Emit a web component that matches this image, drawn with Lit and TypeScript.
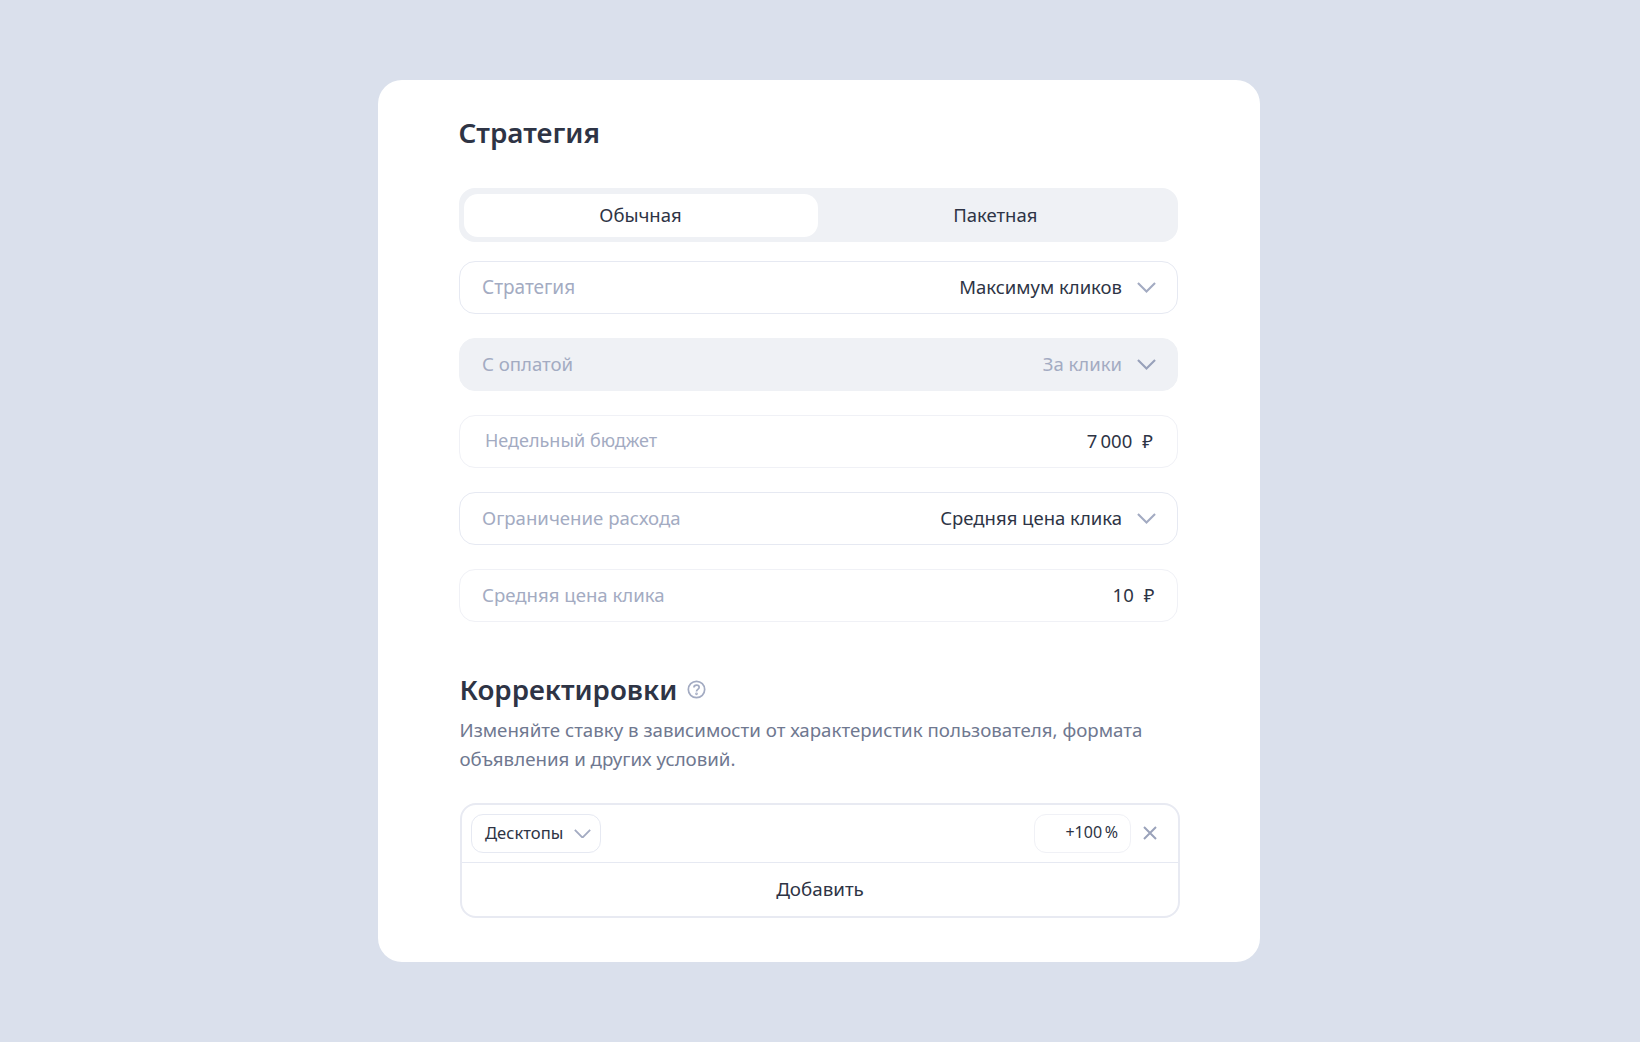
import { LitElement, html, css } from "lit";
import { customElement } from "lit/decorators.js";

const chevron = (cls: string) => html`<svg class=${cls} viewBox="0 0 20 11" fill="none" stroke="currentColor" stroke-width="2.2"><path d="M1 1 10 10 19 1"/></svg>`;

@customElement("app-root")
export class AppRoot extends LitElement {
  static styles = css`
    :host { display: block; font-family: "Noto Sans", sans-serif; color: #2e3445; }
    * { box-sizing: border-box; }
    .page { height: 1042px; overflow: hidden; background: #dae0ec; padding: 80px 2px 0 0; display: flex; justify-content: center; align-items: flex-start; }
    .card { width: 882px; height: 881.5px; background: #fff; border-radius: 24px; padding: 0 82px 0 80.5px; display: flex; flex-direction: column; }
    h1 { margin: 0; font-size: 27.8px; line-height: 36px; font-weight: 600; padding-top: 33.5px; height: 108px; }
    .tabs { height: 54px; background: #eff1f5; border-radius: 16px; display: flex; padding: 6px 5px 5px; margin-bottom: 19px; }
    .tab { flex: 1; display: flex; align-items: center; justify-content: center; font-size: 18.5px; border-radius: 14px; padding-bottom: 2px; }
    .tab.on { background: #fff; flex: 0 0 354px; }
    .field { height: 53px; border: 1.5px solid #e6e9f2; border-radius: 16px; display: flex; align-items: center; justify-content: space-between; padding: 0 21px 2px 22.5px; font-size: 18.5px; margin-bottom: 24px; }
    .field.input { border-color: #f0f1f6; height: 52.5px; margin-bottom: 24.5px; }
    .field.dis { background: #eff1f5; border-color: #eff1f5; }
    .field.w { padding-left: 25.5px; }
    .field.w .label { font-size: 18px; }
    .label { color: #a3abc2; font-size: 18.6px; }
    .label.big { font-size: 19px; }
    .val { display: flex; align-items: center; gap: 15px; }
    .dis .val span { color: #a3abc2; }
    .chev { width: 19px; height: 10.5px; color: #a3abc2; flex: none; margin-top: 2px; }
    .dis .chev { color: #98a1ba; }
    .cur { display: flex; gap: 10px; padding-right: 3px; }
    .cur.n { padding-right: 1.5px; }
    h2 { margin: 25px 0 0 1px; font-size: 27.7px; line-height: 36px; font-weight: 600; display: flex; align-items: center; gap: 10px; }
    h2 svg { width: 19px; height: 19px; }
    p { margin: 9px 0 0 1px; font-size: 18.7px; line-height: 28.7px; color: #6f7890; }
    .group { margin: 29.5px -2px 0 1.5px; border: 2px solid #e8eaf2; border-radius: 16px; height: 115px; display: flex; flex-direction: column; }
    .row { height: 58px; flex: none; border-bottom: 1.5px solid #e6e9f2; display: flex; align-items: center; padding: 0 21px 0 9px; }
    .chip { width: 130px; height: 39px; border: 1.5px solid #e6e9f2; border-radius: 12px; display: flex; align-items: center; justify-content: space-between; padding: 0 9px 2px 13px; font-size: 16.6px; }
    .chip .chev { width: 17px; height: 9.5px; }
    .pct { margin-left: auto; width: 97px; height: 39px; border: 1.5px solid #f0f1f6; border-radius: 12px; display: flex; align-items: center; justify-content: flex-end; padding: 0 12px 2px 0; font-size: 16px; }
    .x { width: 14px; height: 14px; margin-left: 12px; color: #9aa2ba; flex: none; }
    .add { flex: 1; display: flex; align-items: center; justify-content: center; font-size: 18.8px; }
  `;
  render() {
    return html`<div class="page"><div class="card">
      <h1>Стратегия</h1>
      <div class="tabs"><div class="tab on">Обычная</div><div class="tab">Пакетная</div></div>
      <div class="field"><span class="label big">Стратегия</span><div class="val"><span>Максимум кликов</span>${chevron("chev")}</div></div>
      <div class="field dis"><span class="label">С оплатой</span><div class="val"><span>За клики</span>${chevron("chev")}</div></div>
      <div class="field input w"><span class="label">Недельный бюджет</span><div class="cur"><span>7\u2009000</span><span>₽</span></div></div>
      <div class="field"><span class="label">Ограничение расхода</span><div class="val"><span>Средняя цена клика</span>${chevron("chev")}</div></div>
      <div class="field input"><span class="label">Средняя цена клика</span><div class="cur n"><span>10</span><span>₽</span></div></div>
      <h2>Корректировки <svg viewBox="0 0 20 20" fill="none" stroke="#a3abc2" stroke-width="1.8"><circle cx="10" cy="10" r="8.6"/><path d="M7.3 8c0-1.6 1.2-2.6 2.8-2.6s2.7 1 2.7 2.3c0 2.2-2.8 2.1-2.8 4.3"/><circle cx="10" cy="14.6" r=".5"/></svg></h2>
      <p>Изменяйте ставку в зависимости от характеристик пользователя, формата объявления и других условий.</p>
      <div class="group">
        <div class="row"><div class="chip"><span>Десктопы</span>${chevron("chev")}</div><div class="pct">+100\u2009%</div>
          <svg class="x" viewBox="0 0 14 14" fill="none" stroke="currentColor" stroke-width="2"><path d="M1 1 13 13M13 1 1 13"/></svg></div>
        <div class="add">Добавить</div>
      </div>
    </div></div>`;
  }
}
